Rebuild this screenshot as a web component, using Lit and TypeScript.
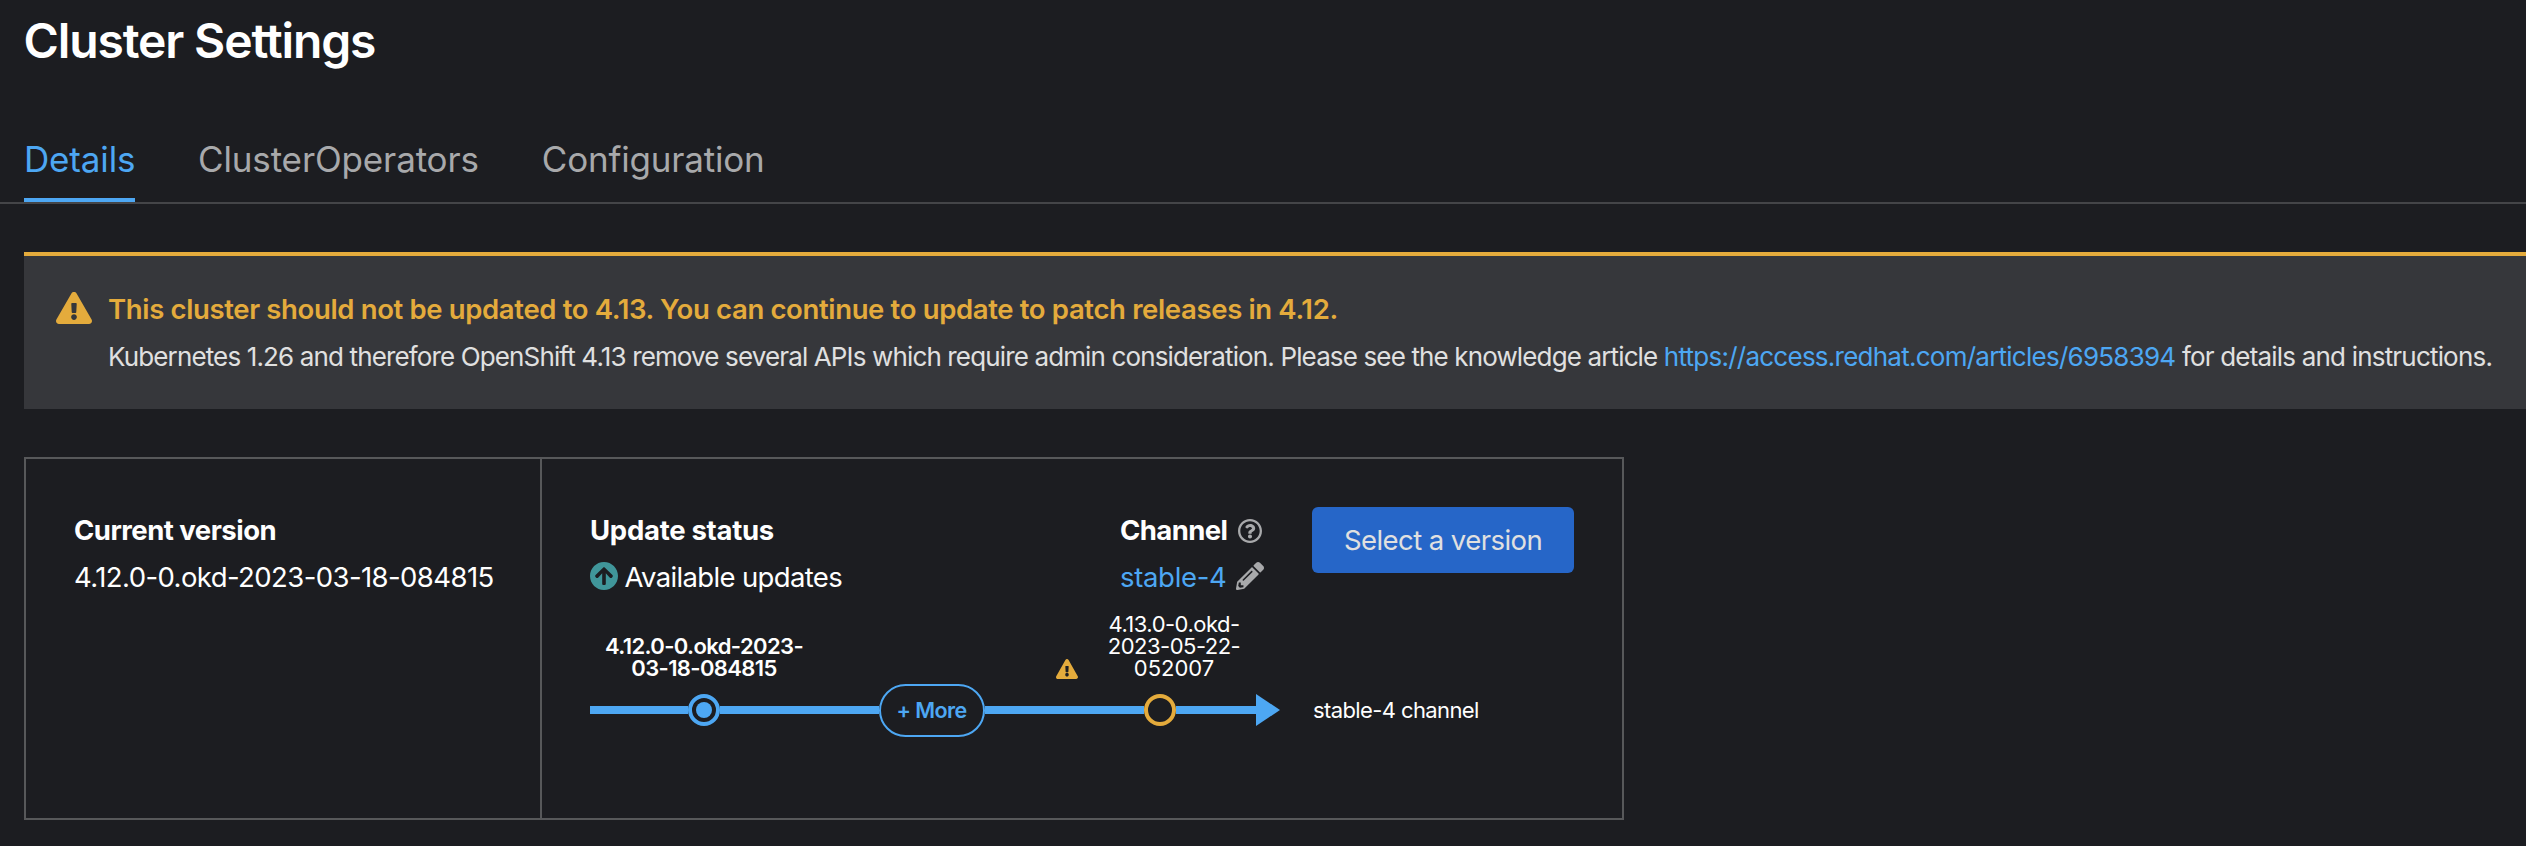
import { LitElement, html, css, svg } from "lit";
import { customElement } from "lit/decorators.js";

const glyph = (cls: string, box: string, d: string) =>
  html`<svg class=${cls} viewBox=${box} preserveAspectRatio="none" aria-hidden="true">${svg`<path fill="currentColor" d=${d}></path>`}</svg>`;

const FULL = "0 0 512 512";
const DISC = "8 8 496 496";
const WARN =
  "M569.517 440.013C587.975 472.007 564.806 512 527.94 512H48.054c-36.937 0-59.999-40.055-41.577-71.987L246.423 23.985c18.467-32.009 64.72-31.951 83.154 0l239.94 416.028zM288 354c-25.405 0-46 20.595-46 46s20.595 46 46 46 46-20.595 46-46-20.595-46-46-46zm-43.673-165.346l7.418 136c.347 6.364 5.609 11.346 11.982 11.346h48.546c6.373 0 11.635-4.982 11.982-11.346l7.418-136c.375-6.874-5.098-12.654-11.982-12.654h-63.383c-6.884 0-12.356 5.78-11.981 12.654z";
const ARROW_UP =
  "M8 256C8 119 119 8 256 8s248 111 248 248-111 248-248 248S8 393 8 256zm143.6 28.9l72.4-75.5V392c0 13.3 10.7 24 24 24h16c13.3 0 24-10.7 24-24V209.4l72.4 75.5c9.3 9.7 24.8 9.9 34.3.4l10.9-11c9.4-9.4 9.4-24.6 0-33.9L273 107.7c-9.4-9.4-24.6-9.4-33.9 0L106.3 240.4c-9.4 9.4-9.4 24.6 0 33.9l10.9 11c9.6 9.5 25.1 9.3 34.4-.4z";
const QUESTION =
  "M256 8C119.043 8 8 119.083 8 256c0 136.997 111.043 248 248 248s248-111.003 248-248C504 119.083 392.957 8 256 8zm0 448c-110.532 0-200-89.431-200-200 0-110.495 89.472-200 200-200 110.491 0 200 89.471 200 200 0 110.53-89.431 200-200 200zm107.244-255.2c0 67.052-72.421 68.084-72.421 92.863V300c0 6.627-5.373 12-12 12h-45.647c-6.627 0-12-5.373-12-12v-8.659c0-35.745 27.1-50.034 47.579-61.516 17.561-9.845 28.324-16.541 28.324-29.579 0-17.246-21.999-28.693-39.784-28.693-23.189 0-33.894 10.977-48.942 29.969-4.057 5.12-11.46 6.071-16.666 2.124l-27.824-21.098c-5.107-3.872-6.251-11.066-2.644-16.363C184.846 131.491 214.94 112 261.794 112c49.071 0 101.45 38.304 101.45 88.8zM298 368c0 23.159-18.841 42-42 42s-42-18.841-42-42 18.841-42 42-42 42 18.841 42 42z";
const PENCIL =
  "M497.9 142.1l-46.1 46.1c-4.7 4.7-12.3 4.7-17 0l-111-111c-4.7-4.7-4.7-12.3 0-17l46.1-46.1c18.7-18.7 49.1-18.7 67.9 0l60.1 60.1c18.8 18.7 18.8 49.1 0 67.9zM284.2 99.8L21.6 362.4.4 483.9c-2.9 16.4 11.4 30.6 27.8 27.8l121.5-21.3 262.6-262.6c4.7-4.7 4.7-12.3 0-17l-111-111c-4.8-4.7-12.4-4.7-17.1 0zM124.1 339.9c-5.5-5.5-5.5-14.3 0-19.8l154-154c5.5-5.5 14.3-5.5 19.8 0s5.5 14.3 0 19.8l-154 154c-5.5 5.5-14.3 5.5-19.8 0zM88 424h48v36.3l-64.5 11.3-31.1-31.1L51.7 376H88v48z";

@customElement("update-graph")
export class UpdateGraph extends LitElement {
  static styles = css`
    :host { display: block; font-size: 22px; line-height: 22px; color: #fff; }
    .labels { display: grid; grid-template-columns: 228px 228px 228px; height: 66px; align-items: end; text-align: center; }
    .current { font-weight: 600; letter-spacing: -0.61px; }
    .target { display: flex; align-items: flex-end; padding-left: 10px; }
    .warn { width: 22px; height: 20px; color: #e4ab3c; flex: none; }
    .next { width: 140px; margin-left: 26px; letter-spacing: -0.52px; }
    .six { letter-spacing: 0; }
    .track { display: flex; align-items: center; height: 52px; margin-top: 5px; }
    .bar { height: 8px; background: #4da7f3; }
    .b1 { width: 98px; }
    .b2 { width: 159px; }
    .b3 { width: 159px; }
    .b4 { width: 80px; }
    .node { box-sizing: border-box; width: 32px; height: 32px; border-radius: 50%; border: 4px solid #4da7f3; display: flex; align-items: center; justify-content: center; }
    .dot { width: 16px; height: 16px; border-radius: 50%; background: #4da7f3; }
    .pending { border-color: #e4ab3c; }
    .more { box-sizing: border-box; width: 106px; height: 53px; margin-bottom: -1px; border: 2px solid #4da7f3; border-radius: 27px; background: none; padding: 0 1px 0 0; font: 600 21.5px/49px Inter, sans-serif; letter-spacing: -0.57px; color: #4da7f3; white-space: nowrap; text-align: center; }
    .arrow { width: 24px; height: 32px; color: #4da7f3; }
    .channel { margin-left: 33px; line-height: 52px; letter-spacing: -0.61px; white-space: nowrap; }
  `;
  render() {
    return html`
      <div class="labels">
        <div class="current">4.12.0-0.okd-2023-<br />03-18-084815</div>
        <div></div>
        <div class="target">
          ${glyph("warn", "0 0 576 512", WARN)}
          <div class="next">4.13.0-0.okd-<br />2023-05-22-<br /><span class="six">052007</span></div>
        </div>
      </div>
      <div class="track">
        <div class="bar b1"></div>
        <div class="node"><div class="dot"></div></div>
        <div class="bar b2"></div>
        <button class="more">+ More</button>
        <div class="bar b3"></div>
        <div class="node pending"></div>
        <div class="bar b4"></div>
        ${glyph("arrow", "0 0 24 32", "M0 0L24 16L0 32Z")}
        <div class="channel">stable-4 channel</div>
      </div>
    `;
  }
}

@customElement("app-root")
export class AppRoot extends LitElement {
  static styles = css`
    :host { display: block; box-sizing: border-box; height: 846px; overflow: hidden; background: #1c1d21; color: #fff; font-family: Inter, "Open Sans", sans-serif; font-size: 27.5px; line-height: 40px; padding-top: 16px; }
    h1, h2, p { margin: 0; }
    h1 { padding-left: 23.5px; font-size: 48px; line-height: 49px; font-weight: 600; letter-spacing: -1.14px; }
    .tabs { display: flex; gap: 63px; margin-top: 74px; padding-left: 24px; border-bottom: 2px solid #444548; font-size: 35px; color: #a8a9ab; }
    .tab { height: 59px; border-bottom: 4px solid transparent; letter-spacing: -0.14px; }
    .tab.active { width: 111px; color: #4da7f3; border-color: #4da7f3; white-space: nowrap; letter-spacing: -0.15px; }
    .tab.last { letter-spacing: -0.2px; }
    .alert { box-sizing: border-box; display: flex; margin: 48px 0 0 24px; height: 157px; padding: 32px 0 0 32px; border-top: 4px solid #e4ab3c; background: #36373b; white-space: nowrap; }
    .alert-icon { width: 36px; height: 32px; margin: 4px 16px 0 0; color: #e4ab3c; flex: none; }
    .alert h2 { font-size: 27.5px; line-height: 42px; font-weight: 600; letter-spacing: -0.353px; color: #e4ab3c; }
    .alert p { margin: 7px 0 0; font-size: 26px; line-height: 39px; letter-spacing: -0.862px; color: #e0e0e0; }
    .link { color: #4da7f3; text-decoration: none; letter-spacing: -0.752px; }
    .tail { letter-spacing: -0.806px; }
    .card { box-sizing: border-box; display: flex; margin: 48px 0 0 24px; width: 1600px; height: 363px; border: 2px solid #57585a; white-space: nowrap; }
    .version { box-sizing: border-box; width: 516px; padding: 51px 0 0 48px; border-right: 2px solid #57585a; letter-spacing: -0.58px; }
    .card h2 { font-size: 27.5px; line-height: 40px; font-weight: 700; margin-bottom: 7px; letter-spacing: -0.52px; }
    .update { flex: 1; padding: 48px 48px 0; }
    .head { display: flex; height: 90px; margin-bottom: 16px; }
    .status { flex: 1; padding-top: 3px; letter-spacing: -0.65px; }
    .head .status h2 { letter-spacing: -0.28px; }
    .row { display: flex; align-items: center; }
    .up { width: 28px; height: 28px; margin: 0 6.5px 2px 0; color: #40969a; }
    .channel { width: 144px; padding-top: 3px; margin-right: 48px; }
    .head .channel h2 { letter-spacing: -0.59px; }
    .help { width: 24px; height: 24px; margin: 2px 0 0 10.5px; color: #a8a9ab; }
    .stable { color: #4da7f3; letter-spacing: -0.324px; }
    .pencil { width: 28px; height: 28px; margin: 0 0 2px 9.5px; color: #a8a9ab; }
    .select { width: 262px; height: 66px; padding: 0; border: 0; border-radius: 6px; background: #2666c8; color: #e0e0e0; font: 400 27.5px/66px Inter, sans-serif; letter-spacing: -0.564px; }
  `;
  render() {
    return html`
      <h1>Cluster Settings</h1>
      <nav class="tabs">
        <div class="tab active">Details</div>
        <div class="tab">ClusterOperators</div>
        <div class="tab last">Configuration</div>
      </nav>
      <section class="alert">
        ${glyph("alert-icon", "0 0 576 512", WARN)}
        <div>
          <h2>This cluster should not be updated to 4.13. You can continue to update to patch releases in 4.12.</h2>
          <p>Kubernetes 1.26 and therefore OpenShift 4.13 remove several APIs which require admin consideration. Please see the knowledge article <a class="link">https://access.redhat.com/articles/6958394</a><span class="tail"> for details and instructions.</span></p>
        </div>
      </section>
      <section class="card">
        <div class="version">
          <h2>Current version</h2>
          <div>4.12.0-0.okd-2023-03-18-084815</div>
        </div>
        <div class="update">
          <div class="head">
            <div class="status">
              <h2>Update status</h2>
              <div class="row">${glyph("up", DISC, ARROW_UP)}<span>Available updates</span></div>
            </div>
            <div class="channel">
              <h2 class="row">Channel${glyph("help", DISC, QUESTION)}</h2>
              <div class="row"><a class="stable">stable-4</a>${glyph("pencil", FULL, PENCIL)}</div>
            </div>
            <button class="select">Select a version</button>
          </div>
          <update-graph></update-graph>
        </div>
      </section>
    `;
  }
}
